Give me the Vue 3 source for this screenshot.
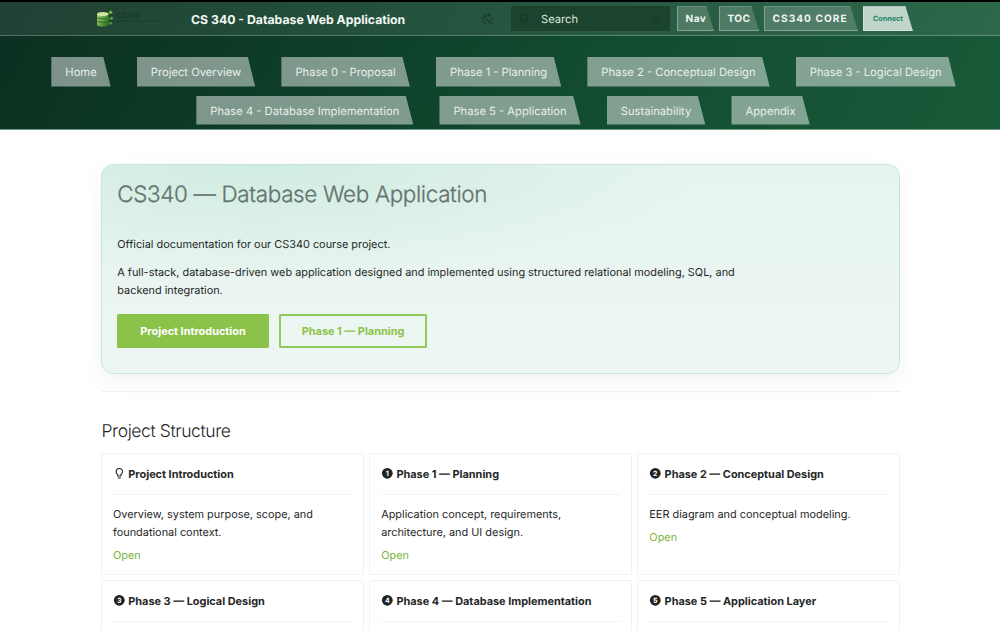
<script setup>
const rows = [
  ['Home', 'Project Overview', 'Phase 0 - Proposal', 'Phase 1 - Planning', 'Phase 2 - Conceptual Design', 'Phase 3 - Logical Design'],
  ['Phase 4 - Database Implementation', 'Phase 5 - Application', 'Sustainability', 'Appendix'],
]
const cards = [
  { icon: 'bulb', title: 'Project Introduction', text: 'Overview, system purpose, scope, and foundational context.' },
  { icon: '1', title: 'Phase 1 — Planning', text: 'Application concept, requirements, architecture, and UI design.' },
  { icon: '2', title: 'Phase 2 — Conceptual Design', text: 'EER diagram and conceptual modeling.' },
  { icon: '3', title: 'Phase 3 — Logical Design' },
  { icon: '4', title: 'Phase 4 — Database Implementation' },
  { icon: '5', title: 'Phase 5 — Application Layer' },
]
</script>

<template>
  <div class="page">
    <div class="top">
      <header class="bar">
        <svg class="logo" viewBox="0 0 68 20">
          <defs>
            <linearGradient id="db" x1="0" x2="1" y1="0" y2="0.6">
              <stop offset="0" stop-color="#b5d67c" />
              <stop offset="0.5" stop-color="#69a83f" />
              <stop offset="1" stop-color="#34752f" />
            </linearGradient>
          </defs>
          <path d="M10 6.5 14 3.5M10 9.5h5M10 12.5l4 2" stroke="#5b9b3d" stroke-width="1" />
          <path d="M1 5v10.500c0 3 11.500 3 11.500 0V5z" fill="url(#db)" />
          <ellipse cx="6.750" cy="5" rx="5.750" ry="2" fill="#cfe79c" />
          <path d="M1 8.300c1.500 2 10 2 11.500 0M1 11.800c1.500 2 10 2 11.500 0" fill="none" stroke="#285f30" stroke-width="0.900" />
          <circle cx="14.700" cy="3.300" r="1.700" fill="#73b13f" />
          <circle cx="15.500" cy="9.300" r="1.500" fill="#5da13b" />
          <circle cx="14.700" cy="14.300" r="1.500" fill="#4e9138" />
          <text x="20" y="8.500" class="logo-name">CS340</text>
          <text x="20" y="12.500" class="logo-sub" textLength="46">DATABASE WEB APPLICATION</text>
        </svg>
        <div class="site">CS 340 - Database Web Application</div>
        <svg class="moon" viewBox="0 0 24 24"><path d="m17.750 4.090-2.530 1.940.910 3.060-2.630-1.810-2.630 1.810.910-3.060-2.530-1.940L12.440 4l1.060-3 1.060 3 3.190.090m3.500 6.910-1.640 1.250.590 1.980-1.700-1.170-1.700 1.170.590-1.980L15.750 11l2.060-.050L18.500 9l.690 1.950 2.060.050m-2.280 4.950c.830-.080 1.720 1.100 1.190 1.850-.320.450-.660.870-1.080 1.270C15.170 23 8.840 23 4.940 19.070c-3.910-3.900-3.910-10.240 0-14.140.400-.400.820-.760 1.270-1.080.750-.530 1.930.360 1.850 1.190-.270 2.860.690 5.830 2.890 8.020a9.960 9.960 0 0 0 8.020 2.890m-1.640 2.020a12.080 12.080 0 0 1-7.800-3.470c-2.170-2.190-3.330-5-3.490-7.820-2.810 3.140-2.700 7.960.310 10.980 3.020 3.010 7.840 3.120 10.980.310Z" /></svg>
        <div class="search">
          <svg viewBox="0 0 24 24"><path d="M9.500 3A6.500 6.500 0 0 1 16 9.500c0 1.610-.590 3.090-1.560 4.230l.270.270h.790l5 5-1.500 1.500-5-5v-.790l-.270-.270A6.516 6.516 0 0 1 9.500 16a6.500 6.500 0 0 1 0-13m0 2C7 5 5 7 5 9.500S7 14 9.500 14 14 12 14 9.500 12 5 9.500 5Z" /></svg>
          <span>Search</span>
          <svg class="clear" viewBox="0 0 24 24"><path d="M19 6.410 17.590 5 12 10.590 6.410 5 5 6.410 10.590 12 5 17.590 6.410 19 12 13.410 17.590 19 19 17.590 13.410 12 19 6.410Z" /></svg>
        </div>
        <div class="btn nav">Nav</div>
        <div class="btn toc">TOC</div>
        <div class="btn core">CS340 CORE</div>
        <div class="btn connect">Connect</div>
      </header>
      <nav class="tabs">
        <div v-for="(row, i) in rows" :key="i" class="row">
          <a v-for="t in row" :key="t" class="tab">{{ t }}</a>
        </div>
      </nav>
    </div>

    <main>
      <section class="hero">
        <h1>CS340 — Database Web Application</h1>
        <p>Official documentation for our CS340 course project.</p>
        <p class="wide">A full-stack, database-driven web application designed and implemented using structured relational modeling, SQL, and backend integration.</p>
        <div class="actions">
          <a class="cta solid">Project Introduction</a>
          <a class="cta">Phase 1 — Planning</a>
        </div>
      </section>
      <div class="rule"></div>
      <h2>Project Structure</h2>
      <div class="grid">
        <article v-for="c in cards" :key="c.title" class="card">
          <div class="head">
            <svg v-if="c.icon === 'bulb'" viewBox="0 0 24 24"><path d="M12 2a7 7 0 0 1 7 7c0 2.380-1.190 4.470-3 5.740V17a1 1 0 0 1-1 1H9a1 1 0 0 1-1-1v-2.260C6.190 13.470 5 11.380 5 9a7 7 0 0 1 7-7M9 21v-1h6v1a1 1 0 0 1-1 1h-4a1 1 0 0 1-1-1m3-17a5 5 0 0 0-5 5c0 2.050 1.230 3.810 3 4.580V16h4v-2.420c1.770-.770 3-2.530 3-4.580a5 5 0 0 0-5-5Z" /></svg>
            <svg v-else viewBox="0 0 24 24">
              <circle cx="12" cy="12" r="10.300" />
              <text x="12" y="16.800" class="digit">{{ c.icon }}</text>
            </svg>
            <strong>{{ c.title }}</strong>
          </div>
          <div class="line"></div>
          <template v-if="c.text">
            <p>{{ c.text }}</p>
            <a class="open">Open</a>
          </template>
        </article>
      </div>
    </main>
  </div>
</template>

<style>
body { margin: 0; background: #fff; overflow: hidden; }
</style>

<style scoped>
.page {
  height: 631px;
  overflow: hidden;
  font-family: Inter, "Liberation Sans", sans-serif;
  font-size: 10.900px;
  color: #252727;
  text-rendering: geometricPrecision;
}
.top {
  box-sizing: border-box;
  height: 130px;
  border-top: 2.500px solid #000;
  border-bottom: 1px solid #6d9a83;
  background: linear-gradient(120deg, #0b2e20 0%, #0d3c27 28%, #124b30 58%, #195b39 100%);
}
.bar {
  box-sizing: border-box;
  height: 33.500px;
  display: flex;
  align-items: center;
  padding: 1px 87px 0 96px;
  background: rgba(255, 255, 255, 0.09);
  border-bottom: 1px solid rgba(255, 255, 255, 0.24);
}
.logo { width: 68px; height: 20px; flex: none; }
.logo-name { font-size: 7.500px; font-weight: 500; fill: #173527; }
.logo-sub { font-size: 2.600px; fill: #173527; }
.site {
  width: 290px;
  flex: none;
  margin-left: 27px;
  padding-top: 0.500px;
  font-size: 12.260px;
  font-weight: 700;
  color: #f3f7f4;
  white-space: nowrap;
}
.moon { width: 14px; height: 14px; flex: none; fill: #153b34; }
.search {
  box-sizing: border-box;
  width: 159px;
  height: 25px;
  flex: none;
  margin: 0 7px 0 16px;
  padding: 0 9px 0 7px;
  display: flex;
  align-items: center;
  border-radius: 1.500px;
  background: #1b432d;
  color: #d9e3dc;
}
.search svg { width: 14px; height: 14px; fill: #17382d; }
.search span { margin-left: 9px; font-size: 11.200px; }
.search .clear { width: 11px; height: 11px; margin-left: auto; }
.btn {
  box-sizing: border-box;
  height: 25px;
  flex: none;
  padding-left: 7.500px;
  border: 1px solid rgba(255, 255, 255, 0.3);
  background: rgba(255, 255, 255, 0.18);
  clip-path: polygon(0 0, calc(100% - 7.500px) 0, 100% 100%, 0 100%);
  color: #f0f5f1;
  font-size: 10.100px;
  font-weight: 700;
  line-height: 24px;
  letter-spacing: 0.450px;
  white-space: nowrap;
}
.nav { width: 37px; margin-right: 5px; }
.toc { width: 40px; margin-right: 5px; }
.core { width: 94px; margin-right: 5px; letter-spacing: 1.050px; }
.connect {
  width: 50px;
  padding-left: 9px;
  background: #bfd5c9;
  color: #24806b;
  font-size: 7.200px;
  letter-spacing: 0;
}
.tabs { display: flex; flex-direction: column; gap: 9.500px; padding-top: 21px; }
.row { display: flex; justify-content: center; gap: 26.200px; margin-left: 7px; }
.tab {
  height: 30px;
  padding: 0 14px;
  background: rgba(255, 255, 255, 0.47);
  clip-path: polygon(0 0, calc(100% - 7.500px) 0, 100% 100%, 0 100%);
  color: #e7efe9;
  font-size: 11.200px;
  line-height: 30px;
  white-space: nowrap;
}
.row + .row { margin-left: 6px; }
.row + .row .tab { height: 28.500px; line-height: 31px; }
main { width: 799px; margin: 34px 0 0 101px; }
.hero {
  box-sizing: border-box;
  height: 210px;
  padding: 15px 15.300px;
  border: 1px solid #c5e6dc;
  border-radius: 12.600px;
  background:
    radial-gradient(440px 120px at 20% 0%, rgba(150, 215, 190, 0.28), rgba(150, 215, 190, 0) 100%),
    linear-gradient(180deg, #e6f4ef, #edf6f3);
  box-shadow: 0 7px 22px rgba(0, 0, 0, 0.05);
}
h1 {
  margin: 0 0 27px;
  font-size: 22.400px;
  font-weight: 350;
  line-height: 30px;
  height: 29px;
  letter-spacing: -0.330px;
  color: #65756f;
  -webkit-text-stroke: 0.300px #65756f;
}
p { margin: 0; line-height: 17.920px; }
.hero p { margin-bottom: 10.500px; }
.wide { width: 640px; }
.actions { display: flex; gap: 10px; margin-top: 14px; }
.cta {
  box-sizing: border-box;
  height: 34px;
  padding: 0 21px;
  border: 2px solid #93c95a;
  border-radius: 1.400px;
  color: #8bc34a;
  font-weight: 700;
  line-height: 30px;
  white-space: nowrap;
}
.solid { background: #8bc34a; border-color: #8bc34a; color: #fff; }
.rule { height: 1px; margin-top: 17px; background: #f0f0f0; }
h2 {
  margin: 28px 0 9px 0.500px;
  font-size: 17.500px;
  font-weight: 320;
  line-height: 24px;
  letter-spacing: -0.400px;
}
.grid { display: grid; grid-template-columns: repeat(3, 1fr); gap: 5.500px; }
.card {
  box-sizing: border-box;
  height: 121.500px;
  padding: 11.200px 11px;
  border: 1px solid #f2f2f2;
  border-radius: 1.400px;
}
.head { display: flex; align-items: center; height: 17px; }
.head svg { width: 12.600px; height: 12.600px; margin-right: 2.700px; fill: #212223; }
.head .digit { fill: #fff; font-size: 13.500px; font-weight: 700; text-anchor: middle; }
.line { height: 1px; margin: 11.500px 0 11.700px; background: #f2f2f2; }
.card p { line-height: 17.600px; }
.open { display: block; margin-top: 4.500px; line-height: 18px; color: #76b43b; }
</style>
